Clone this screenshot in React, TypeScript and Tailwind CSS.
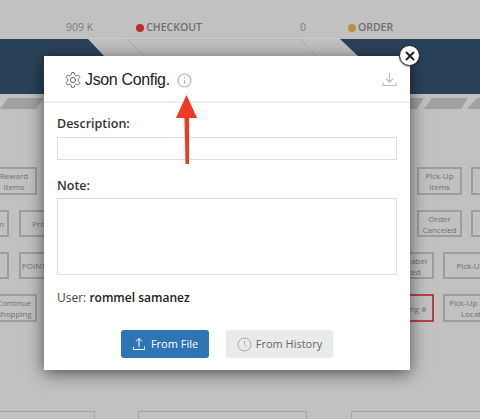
const nodes = [
  { x: -9, y: 167, w: 46, h: 28, label: 'Reward\nItems' },
  { x: -30, y: 210, w: 39, h: 27, label: 'Custom' },
  { x: 19, y: 210, w: 56, h: 27, label: 'Product' },
  { x: -30, y: 252, w: 39, h: 27, label: 'Login' },
  { x: 19, y: 252, w: 60, h: 27, label: 'POINTS', left: true },
  { x: -9, y: 294, w: 46, h: 28, label: 'Continue\nShopping' },
  { x: 417, y: 167, w: 45, h: 28, label: 'Pick-Up\nItems' },
  { x: 471, y: 167, w: 40, h: 28, label: 'I\nA' },
  { x: 417, y: 210, w: 45, h: 27, label: 'Order\nCanceled' },
  { x: 471, y: 210, w: 40, h: 27, label: 'I' },
  { x: 380, y: 252, w: 54, h: 27, label: 'Print Label\nPrinted' },
  { x: 443, y: 252, w: 55, h: 27, label: 'Pick-Up' },
  { x: 380, y: 294, w: 54, h: 28, label: 'Tracking #', red: true },
  { x: 443, y: 294, w: 68, h: 28, label: 'Pick-Up Details\nLocation' },
]

function StageLabel({ dot, text, className }: { dot: string; text: string; className: string }) {
  return (
    <div className={`flex items-center gap-[2px] ${className}`}>
      <span className={`h-2 w-2 rounded-full ${dot}`} />
      <span className="text-[10.5px] font-semibold text-[#6e6e6e]">{text}</span>
    </div>
  )
}

export default function App() {
  return (
    <div className="relative h-[419px] w-[480px] overflow-hidden bg-[#c1c1c1] font-['Open_Sans',sans-serif]">
      {/* page behind the overlay */}
      <div className="flex h-[38px] items-center pl-[66px] pt-[17px] text-[10.5px] font-medium text-[#7d7d7d]">
        <span>909 K</span>
        <StageLabel dot="bg-[#b5312a]" text="CHECKOUT" className="ml-[43px]" />
        <span className="ml-[98px]">0</span>
        <StageLabel dot="bg-[#b8913a]" text="ORDER" className="ml-[42px]" />
      </div>

      <svg className="block" width="480" height="72" viewBox="0 0 480 72">
        <path d="M0 1H88L104 18V56H0Z M340 1H480V56H358V18Z" fill="#2a4258" />
        <path d="M127 1L144 18 M127 1H300L316 18" fill="none" stroke="#adadad" />
        <path d="M88 0.5H340" stroke="#cbcbcb" />
        <path d="M8 60H44L36 71H0Z" fill="#a1a1a1" />
        <path d="M410 60H424L417 71H402Z M432 60H468L461 71H424Z M477 60H480V71H467Z" fill="#a1a1a1" />
      </svg>

      {nodes.map((n) => (
        <div
          key={n.label + n.x}
          className={`absolute flex items-center whitespace-pre-line border-2 text-center text-[8px] leading-[11px] text-[#6f6f6f] ${n.left ? 'justify-start pl-[1px]' : 'justify-center'} ${n.red ? 'border-[#b4443f]' : 'border-[#9d9d9d]'}`}
          style={{ left: n.x, top: n.y, width: n.w, height: n.h }}
        >
          {n.label}
        </div>
      ))}

      {/* bottom row, cut off by the window */}
      <div className="absolute left-[-20px] top-[411px] h-3 w-[115px] border border-[#a3a3a3]" />
      <div className="absolute left-[138px] top-[411px] h-3 w-[169px] border border-[#a3a3a3]" />
      <div className="absolute left-[351px] top-[411px] h-3 w-[150px] border border-[#a3a3a3]" />

      {/* modal */}
      <div className="absolute left-[44px] top-[56px] flex h-[314px] w-[366px] flex-col bg-white shadow-[0_3px_16px_rgba(0,0,0,0.6)]">
        <div className="flex h-[47px] shrink-0 items-center border-b-2 border-[#eeeeee] pl-[20px] pr-[13px] pt-[2px]">
          <svg width="18" height="18" viewBox="0 0 24 24" fill="none" stroke="#555555" strokeWidth="1.2" strokeLinecap="round" strokeLinejoin="round">
            <path d="M12.22 2h-.44a2 2 0 0 0-2 2v.18a2 2 0 0 1-1 1.73l-.43.25a2 2 0 0 1-2 0l-.15-.08a2 2 0 0 0-2.73.73l-.22.38a2 2 0 0 0 .73 2.73l.15.1a2 2 0 0 1 1 1.72v.51a2 2 0 0 1-1 1.74l-.15.09a2 2 0 0 0-.73 2.73l.22.38a2 2 0 0 0 2.73.73l.15-.08a2 2 0 0 1 2 0l.43.25a2 2 0 0 1 1 1.73V20a2 2 0 0 0 2 2h.44a2 2 0 0 0 2-2v-.18a2 2 0 0 1 1-1.73l.43-.25a2 2 0 0 1 2 0l.15.08a2 2 0 0 0 2.73-.73l.22-.39a2 2 0 0 0-.73-2.73l-.15-.08a2 2 0 0 1-1-1.74v-.5a2 2 0 0 1 1-1.74l.15-.09a2 2 0 0 0 .73-2.73l-.22-.38a2 2 0 0 0-2.73-.73l-.15.08a2 2 0 0 1-2 0l-.43-.25a2 2 0 0 1-1-1.73V4a2 2 0 0 0-2-2z" />
            <circle cx="12" cy="12" r="3.5" />
          </svg>
          <span className="ml-[3px] font-['Liberation_Sans',sans-serif] text-[16px] tracking-[-0.35px] text-[#222222]">Json Config.</span>
          <svg className="ml-[7px] mt-[1px]" width="15" height="15" viewBox="0 0 15 15" fill="none" stroke="#b5b5b5" strokeWidth="1.2">
            <circle cx="7.5" cy="7.5" r="6.5" />
            <path d="M7.5 7v4 M7.5 4v1.2" />
          </svg>
          <svg className="ml-auto" width="15" height="15" viewBox="0 0 15 15" fill="none" stroke="#bdbdbd" strokeWidth="1.2">
            <path d="M7.5 1v9M4 6.8l3.5 3.4L11 6.8M1 10.5v3h13v-3" />
          </svg>
        </div>

        <div className="flex flex-1 flex-col px-[13px]">
          <label className="mt-[12px] text-[12.5px] leading-[18px] font-semibold text-[#333333]">Description:</label>
          <div className="mt-[4px] h-[23px] border border-[#dddddd]" />
          <label className="mt-[17px] text-[12.5px] leading-[18px] font-semibold text-[#333333]">Note:</label>
          <div className="mt-[3px] h-[77px] border border-[#dddddd]" />
          <p className="mt-[14px] text-[12px] leading-[18px] text-[#444444]">
            User: <span className="font-semibold text-[#222222]">rommel samanez</span>
          </p>
          <div className="mt-[23px] flex justify-center gap-[17px]">
            <button className="flex h-[28px] w-[88px] items-center justify-center gap-[5px] rounded-[3px] bg-[#2f74b5] text-[11px] font-medium text-white">
              <svg width="14" height="14" viewBox="0 0 14 14" fill="none" stroke="#ffffff" strokeWidth="1">
                <path d="M7 10V1.5M4 4.5L7 1.5L10 4.5M1.5 9.5V12.5H12.5V9.5" />
              </svg>
              From File
            </button>
            <button className="flex h-[28px] w-[107px] items-center justify-center gap-[4px] rounded-[3px] bg-[#e9eaea] text-[11px] font-medium text-[#666666]">
              <svg width="15" height="15" viewBox="0 0 15 15" fill="none" stroke="#a9a9a9" strokeWidth="1">
                <circle cx="7.5" cy="7.5" r="6.5" />
                <path d="M7.5 4v3.5l2 2" />
              </svg>
              From History
            </button>
          </div>
        </div>
      </div>

      {/* close button */}
      <button className="absolute left-[399px] top-[45px] flex h-[21px] w-[21px] items-center justify-center rounded-full border-[1.5px] border-[#222222] bg-white shadow-[0_1px_2px_rgba(0,0,0,0.4)]">
        <svg width="10" height="10" viewBox="0 0 10 10" stroke="#222222" strokeWidth="2">
          <path d="M1 1l8 8M9 1l-8 8" />
        </svg>
      </button>

      {/* annotation arrow */}
      <svg className="absolute left-[174px] top-[94px]" width="26" height="72" viewBox="0 0 26 72">
        <path d="M12.5 1L23 24H15L15 70H11.5L10.5 24H2Z" fill="#ef3b24" stroke="rgba(0,0,0,0.12)" strokeWidth="0.5" />
      </svg>
    </div>
  )
}
